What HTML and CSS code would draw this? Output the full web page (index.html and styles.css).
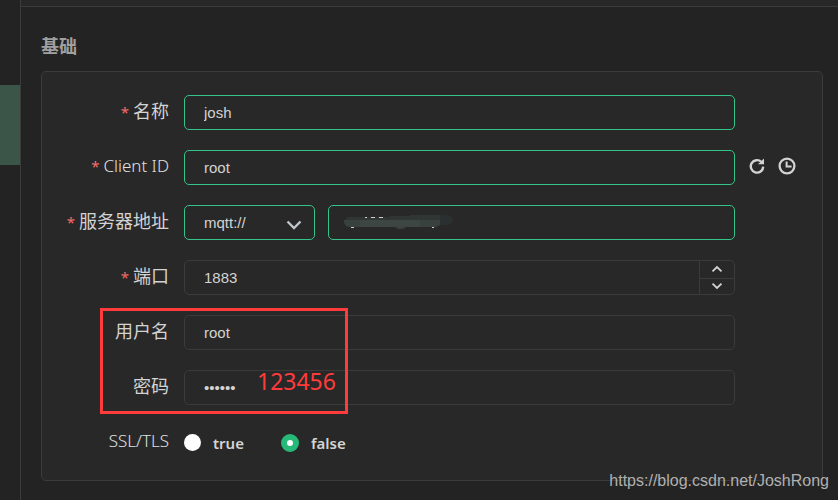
FILE: index.html
```html
<!DOCTYPE html>
<html lang="zh-CN">
<head>
<meta charset="utf-8">
<meta name="viewport" content="width=device-width, initial-scale=1">
<title>基础</title>
<link rel="stylesheet" href="styles.css">
</head>
<body>
<div class="app">
  <aside class="sidebar"><div class="sidebar-active"></div></aside>
  <main class="main">
    <div class="topbar"></div>
    <div class="content">
      <h1 class="title">基础</h1>
      <form class="card">
        <div class="row">
          <label class="label required" for="name">名称</label>
          <input class="field valid" id="name" type="text" value="josh">
        </div>
        <div class="row">
          <label class="label latin required" for="client">Client ID</label>
          <input class="field valid" id="client" type="text" value="root">
          <div class="actions">
            <button class="icon-button" type="button" aria-label="Refresh">
              <svg width="18" height="18" viewBox="0 0 18 18" fill="none" stroke="currentColor" stroke-width="2.400"><path d="M13.400 5A6.200 6.200 0 1 0 15.200 9.600"/><path d="M10 7.200h6V1.600z" fill="currentColor" stroke="none"/></svg>
            </button>
            <button class="icon-button" type="button" aria-label="Timestamp">
              <svg width="18" height="18" viewBox="0 0 18 18" fill="none" stroke="currentColor" stroke-width="2.300"><circle cx="9" cy="9" r="7.400"/><path d="M8.600 4.500v5h5" stroke-width="2"/></svg>
            </button>
          </div>
        </div>
        <div class="row">
          <label class="label required" for="host">服务器地址</label>
          <div class="address">
            <div class="select">
              <select class="field valid" aria-label="Protocol"><option>mqtt://</option></select>
              <svg class="chevron" width="16" height="10" viewBox="0 0 16 10" fill="none" stroke="currentColor" stroke-width="2.400"><path d="M1.500 1.500 8 8l6.500-6.500"/></svg>
            </div>
            <div class="host">
              <input class="field valid" id="host" type="text">
              <svg class="smudge" width="110" height="18" viewBox="0 0 110 18" aria-hidden="true">
                <path fill="#29302f" d="M76 3q2-2 4-2h22q7 0 7 5t-7 5H76z"/>
                <path fill="#303634" d="M2 5q0-2 4-2h38l3-1h19V1h30v6H2z"/>
                <path fill="#39413f" d="M0 6h96v5l-4 2H62l-3 2h-5l-3-2H4q-4-2-4-6z"/>
                <path fill="#3d4643" d="M16 6h60v7H16z"/>
                <path fill="#d0d0d0" d="M21 3h2v1h-2zM27 3h4v1h-4zM35 3h4v1h-4zM7 13h3v1H7zM88 13h2v1h-2z"/>
              </svg>
            </div>
          </div>
        </div>
        <div class="row">
          <label class="label required" for="port">端口</label>
          <div class="field stepper">
            <input class="port" id="port" type="text" inputmode="numeric" value="1883">
            <div class="steps">
              <button class="step" type="button" aria-label="Increase"><svg width="12" height="8" viewBox="0 0 12 8" fill="none" stroke="currentColor" stroke-width="1.800"><path d="M1.500 6.300 6 2l4.500 4.300"/></svg></button>
              <button class="step" type="button" aria-label="Decrease"><svg width="12" height="8" viewBox="0 0 12 8" fill="none" stroke="currentColor" stroke-width="1.800"><path d="M1.500 1.700 6 6l4.500-4.300"/></svg></button>
            </div>
          </div>
        </div>
        <div class="credentials">
          <div class="row">
            <label class="label" for="user">用户名</label>
            <input class="field" id="user" type="text" value="root">
          </div>
          <div class="row">
            <label class="label" for="password">密码</label>
            <input class="field" id="password" type="password" value="123456">
          </div>
          <div class="marker"></div>
          <span class="note">123456</span>
        </div>
        <div class="row">
          <span class="label latin" id="ssl">SSL/TLS</span>
          <div class="radios" role="radiogroup" aria-labelledby="ssl">
            <label class="radio"><input type="radio" name="ssl">true</label>
            <label class="radio"><input type="radio" name="ssl" checked>false</label>
          </div>
        </div>
      </form>
    </div>
  </main>
  <a class="watermark" href="https://blog.csdn.net/JoshRong">https://blog.csdn.net/JoshRong</a>
</div>
</body>
</html>
```
FILE: styles.css
```css
* { box-sizing: border-box; }

body {
  margin: 0;
  background: #232323;
  color: #d3d3d3;
  font-family: "Open Sans", "Noto Sans CJK SC", sans-serif;
}

.app {
  position: relative;
  display: flex;
  min-height: 100vh;
}

.sidebar {
  width: 21px;
  padding-top: 85px;
  border-right: 1px solid #3b3b3b;
}

.sidebar-active {
  height: 80px;
  background: #3b5649;
}

.main { flex: 1; }

.topbar {
  height: 7px;
  background: #282828;
  border-bottom: 1px solid #3b3b3b;
}

.content { padding: 24px 15px 16px 20px; }

.title {
  margin: 0 0 10px;
  color: #a0a0a0;
  font-size: 18px;
  line-height: 30px;
  font-weight: 700;
}

.card {
  display: flex;
  flex-direction: column;
  gap: 20px;
  margin: 0;
  padding: 23px 0 20px;
  background: #282828;
  border: 1px solid #3b3b3b;
  border-radius: 5px;
}

.row {
  display: grid;
  grid-template-columns: 127px 1fr 72px;
  column-gap: 15px;
  height: 35px;
}

.label {
  text-align: right;
  white-space: nowrap;
  font-family: "Noto Sans", "Noto Sans CJK SC", sans-serif;
  font-size: 18px;
  line-height: 32px;
  font-weight: 400;
}

.latin {
  color: #e0e0e0;
  font-size: 17px;
  font-weight: 300;
}

.required::before {
  content: "*";
  margin-right: 4px;
  color: #f56c6c;
  font-size: 15px;
  font-weight: 400;
}

.field {
  width: 100%;
  height: 35px;
  padding: 0 19px;
  border: 1px solid #3b3b3b;
  border-radius: 5px;
  outline: 0;
  background: transparent;
  color: #d3d3d3;
  font-family: "Liberation Sans", sans-serif;
  font-size: 15px;
}

.valid { border-color: #34c388; }

.actions {
  display: flex;
  align-items: center;
  gap: 12px;
  height: 32px;
  margin-left: -2px;
}

.icon-button {
  display: flex;
  padding: 0;
  border: 0;
  background: none;
  color: #d3d3d3;
}

.address {
  display: grid;
  grid-template-columns: 131px 1fr;
  gap: 13px;
}

.select, .host { position: relative; }

.select select { appearance: none; }

.chevron {
  position: absolute;
  top: 15px;
  right: 13px;
  color: #c0c4cc;
  pointer-events: none;
}

.smudge {
  position: absolute;
  top: 9px;
  left: 16px;
}

.stepper {
  display: flex;
  padding: 0 0 0 19px;
}

.port {
  flex: 1;
  min-width: 0;
  padding: 0;
  border: 0;
  outline: 0;
  background: transparent;
  color: inherit;
  font: inherit;
}

.steps {
  display: grid;
  grid-template-rows: 1fr 1fr;
  width: 35px;
  border-left: 1px solid #3b3b3b;
}

.step {
  display: flex;
  align-items: center;
  justify-content: center;
  padding: 0;
  border: 0;
  background: none;
  color: #d3d3d3;
}

.step + .step { border-top: 1px solid #3b3b3b; }

.credentials {
  position: relative;
  display: flex;
  flex-direction: column;
  gap: 20px;
}

.marker {
  position: absolute;
  top: -7px;
  left: 58px;
  width: 248px;
  height: 106px;
  border: 3px solid #ff3b3b;
  pointer-events: none;
}

.note {
  position: absolute;
  top: 49px;
  left: 215px;
  color: #ff3b3b;
  font-family: "Noto Sans", sans-serif;
  font-size: 23px;
  line-height: 34px;
}

.radios {
  display: flex;
  align-items: center;
  gap: 37px;
}

.radio {
  display: flex;
  align-items: center;
  gap: 12px;
  font-family: "Noto Sans", sans-serif;
  font-size: 15px;
  font-weight: 600;
}

.radio input {
  appearance: none;
  width: 17px;
  height: 17px;
  margin: 0;
  border-radius: 50%;
  background: #fff;
}

.radio input:checked {
  width: 18px;
  height: 18px;
  border: 6px solid #26b978;
}

.watermark {
  position: absolute;
  right: 9px;
  bottom: 8px;
  color: #b0b0b0;
  font-family: "Liberation Sans", sans-serif;
  font-size: 16px;
  line-height: 22px;
  text-decoration: none;
}
```
